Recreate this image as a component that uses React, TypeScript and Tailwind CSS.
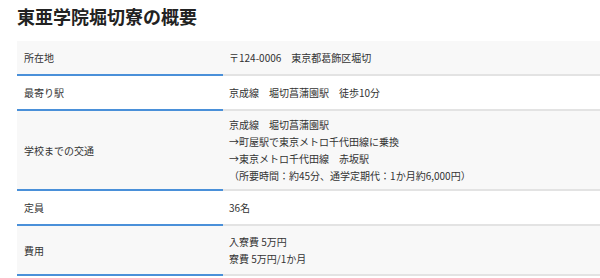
import React from 'react';

type Row = {
  label: string;
  lines: string[];
  height: string;
};

const rows: Row[] = [
  { label: '所在地', lines: ['〒124-0006　東京都葛飾区堀切'], height: 'h-[33px]' },
  { label: '最寄り駅', lines: ['京成線　堀切菖蒲園駅　徒歩10分'], height: 'h-[33px]' },
  {
    label: '学校までの交通',
    lines: [
      '京成線　堀切菖蒲園駅',
      '→町屋駅で東京メトロ千代田線に乗換',
      '→東京メトロ千代田線　赤坂駅',
      '（所要時間：約45分、通学定期代：1か月約6,000円）',
    ],
    height: 'h-[78px]',
  },
  { label: '定員', lines: ['36名'], height: 'h-[33px]' },
  { label: '費用', lines: ['入寮費 5万円', '寮費 5万円/1か月'], height: 'h-[48px]' },
];

export default function App() {
  return (
    <div
      className="w-[600px] h-[278px] overflow-hidden bg-white text-[#333]"
      style={{ fontFamily: '"Noto Sans CJK JP", "Noto Sans", sans-serif' }}
    >
      <h1 className="pl-[17px] pt-[3px] h-[41px] text-[18px] leading-[26px] font-bold text-[#222]">
        東亜学院堀切寮の概要
      </h1>

      <div className="ml-[17px]">
        {rows.map((row, i) => (
          <div key={row.label} className={`flex ${i % 2 === 0 ? 'bg-[#f8f8f8]' : 'bg-white'}`}>
            <div className="w-[206px] border-b-2 border-[#4a90d9]">
              <div className={`flex items-center pl-[7px] text-[10px] ${row.height}`}>{row.label}</div>
            </div>
            <div className="flex-1 border-b-2 border-[#e3e3e3]">
              <div className={`flex flex-col justify-center pl-[6px] text-[10px] leading-[17px] ${row.height}`}>
                {row.lines.map((line) => (
                  <div key={line}>{line}</div>
                ))}
              </div>
            </div>
          </div>
        ))}
      </div>
    </div>
  );
}
